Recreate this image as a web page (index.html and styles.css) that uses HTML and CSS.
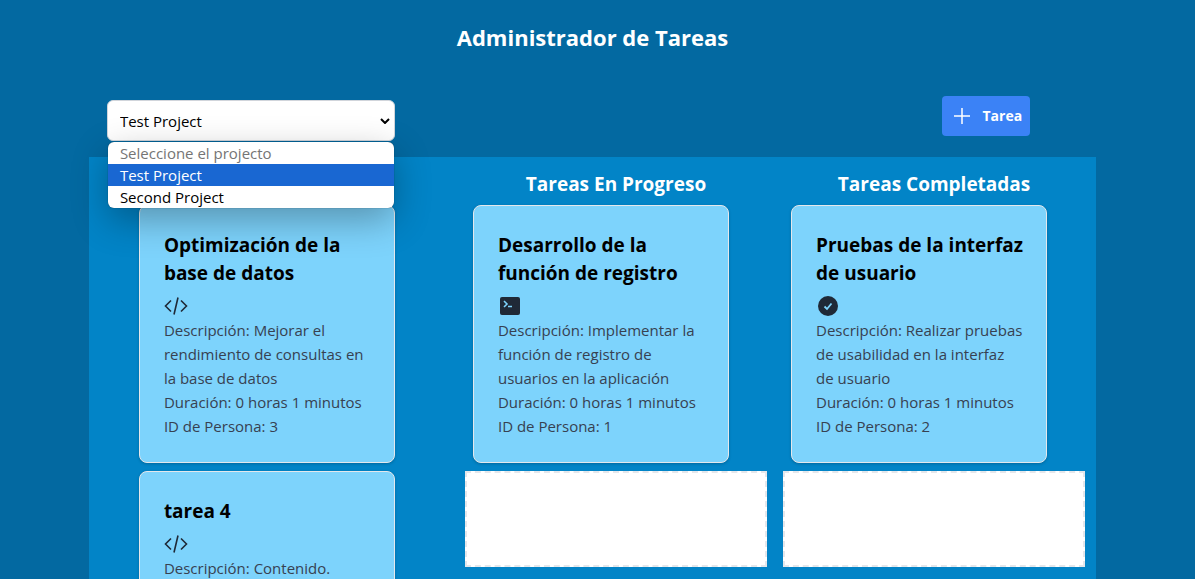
FILE: index.html
```html
<!DOCTYPE html>
<html lang="es">
<head>
<meta charset="utf-8">
<meta name="viewport" content="width=device-width, initial-scale=1">
<title>Administrador de Tareas</title>
<link rel="stylesheet" href="styles.css">
</head>
<body>
<svg class="sprite" aria-hidden="true">
  <symbol id="code" viewBox="0 0 24 24"><path d="M7 6.500 1.500 12l5.500 5.500M17 6.500 22.500 12l-5.500 5.500M14 3.500 10 20.500" fill="none" stroke="currentColor" stroke-width="1.600"/></symbol>
  <symbol id="terminal" viewBox="0 0 24 24"><rect x="2" y="3" width="20" height="18" rx="2" fill="currentColor"/><path d="m6 7 3 3-3 3M10 12.500h4" fill="none" stroke="#7dd3fc" stroke-width="1.600"/></symbol>
  <symbol id="check" viewBox="0 0 24 24"><circle cx="12" cy="12" r="10" fill="currentColor"/><path d="m8.500 12.500 2.500 2.500 4.500-5.500" fill="none" stroke="#7dd3fc" stroke-width="1.800"/></symbol>
</svg>
<main class="page">
  <h1 class="page-title">Administrador de Tareas</h1>
  <div class="toolbar">
    <div class="picker">
      <select class="picker-select" aria-label="Proyecto">
        <option disabled>Seleccione el projecto</option>
        <option selected>Test Project</option>
        <option>Second Project</option>
      </select>
      <svg class="picker-arrow" viewBox="0 0 10 6" aria-hidden="true"><path d="m1 1 4 4 4-4" fill="none" stroke="#000" stroke-width="2"/></svg>
      <ul class="picker-menu">
        <li class="picker-item picker-item-disabled">Seleccione el projecto</li>
        <li class="picker-item picker-item-active">Test Project</li>
        <li class="picker-item">Second Project</li>
      </ul>
    </div>
    <button class="add-button" type="button">
      <svg class="add-icon" viewBox="0 0 24 24" aria-hidden="true"><path d="M12 4v16M4 12h16" stroke="currentColor" stroke-width="1.500"/></svg>
      Tarea
    </button>
  </div>
  <div class="board">
    <section class="column" aria-label="Tareas pendientes">
      <div class="column-title"></div>
      <article class="card">
        <h3 class="card-title">Optimización de la base de datos</h3>
        <svg class="card-icon" aria-hidden="true"><use href="#code"/></svg>
        <p class="card-text">Descripción: Mejorar el rendimiento de consultas en la base de datos</p>
        <p class="card-text">Duración: 0 horas 1 minutos</p>
        <p class="card-text">ID de Persona: 3</p>
      </article>
      <article class="card">
        <h3 class="card-title">tarea 4</h3>
        <svg class="card-icon" aria-hidden="true"><use href="#code"/></svg>
        <p class="card-text">Descripción: Contenido.</p>
      </article>
    </section>
    <section class="column column-next">
      <h2 class="column-title">Tareas En Progreso</h2>
      <article class="card">
        <h3 class="card-title">Desarrollo de la función de registro</h3>
        <svg class="card-icon" aria-hidden="true"><use href="#terminal"/></svg>
        <p class="card-text">Descripción: Implementar la función de registro de usuarios en la aplicación</p>
        <p class="card-text">Duración: 0 horas 1 minutos</p>
        <p class="card-text">ID de Persona: 1</p>
      </article>
      <div class="drop-zone"></div>
    </section>
    <section class="column column-next">
      <h2 class="column-title">Tareas Completadas</h2>
      <article class="card">
        <h3 class="card-title">Pruebas de la interfaz de usuario</h3>
        <svg class="card-icon" aria-hidden="true"><use href="#check"/></svg>
        <p class="card-text">Descripción: Realizar pruebas de usabilidad en la interfaz de usuario</p>
        <p class="card-text">Duración: 0 horas 1 minutos</p>
        <p class="card-text">ID de Persona: 2</p>
      </article>
      <div class="drop-zone"></div>
    </section>
  </div>
</main>
</body>
</html>
```
FILE: styles.css
```css
* { box-sizing: border-box; }
html { overflow: hidden; background: #0369a1; }
body {
  margin: 0;
  padding-right: 10px;
  font-family: "Open Sans", "Noto Sans", sans-serif;
  font-size: 15px;
  line-height: 24px;
}
h1, h2, h3, p, ul { margin: 0; padding: 0; }
.sprite { position: absolute; width: 0; height: 0; }
.page { padding-top: 20px; }
.page-title {
  color: #fff;
  font-size: 22px;
  line-height: 34px;
  font-weight: 700;
  text-align: center;
}
.toolbar {
  display: flex;
  justify-content: space-between;
  align-items: flex-start;
  width: 85%;
  margin: 42px auto 0;
  padding: 0 66px 0 18px;
}
.picker { position: relative; width: 288px; margin: 4px 0 16px; }
.picker-select {
  display: block;
  appearance: none;
  width: 100%;
  height: 41px;
  padding: 0 12px;
  border: 1px solid #d1d5db;
  border-radius: 6px;
  background: #fff;
  color: #000;
  font: inherit;
}
.picker-arrow { position: absolute; right: 5px; top: 18px; width: 10px; height: 6px; }
.picker-menu {
  position: absolute;
  z-index: 2;
  top: 42px;
  left: 1px;
  right: 1px;
  overflow: hidden;
  border-radius: 6px;
  background: #fff;
  box-shadow: 0 0 1px rgba(0, 0, 0, .6), 0 12px 36px rgba(0, 0, 0, .3);
  list-style: none;
}
.picker-item { padding: 0 12px; line-height: 22px; color: #000; }
.picker-item-disabled { color: #757575; }
.picker-item-active { background: #1967d2; color: #fff; }
.add-button {
  display: flex;
  align-items: center;
  gap: 8px;
  height: 40px;
  padding: 0 8px;
  border: 0;
  border-radius: 4px;
  background: #3b82f6;
  color: #fff;
  font: inherit;
  font-size: 14px;
  font-weight: 700;
}
.add-icon { width: 24px; height: 24px; }
.board {
  display: grid;
  grid-template-columns: repeat(3, minmax(0, 1fr));
  width: 85%;
  margin: 0 auto;
  padding: 13px 11px 12px 42px;
  background: #0284c7;
}
.column-next { padding-left: 16px; }
.column-title {
  height: 28px;
  margin-bottom: 7px;
  color: #fff;
  font-size: 19px;
  line-height: 28px;
  font-weight: 700;
  text-align: center;
}
.card {
  width: 256px;
  max-width: calc(100% - 16px);
  margin: 0 8px 8px;
  padding: 25px 22px 24px 24px;
  border: 1px solid #e5e7eb;
  border-radius: 8px;
  background: #7dd3fc;
  box-shadow: 0 1px 3px rgba(0, 0, 0, .2);
}
.card-title {
  margin-bottom: 7px;
  color: #000;
  font-size: 19px;
  line-height: 28px;
  font-weight: 700;
}
.card-icon { display: block; width: 24px; height: 24px; color: #1f2937; }
.card-text { color: #374151; }
.drop-zone { height: 96px; border: 2px dashed #e5e7eb; background: #fff; }
```
